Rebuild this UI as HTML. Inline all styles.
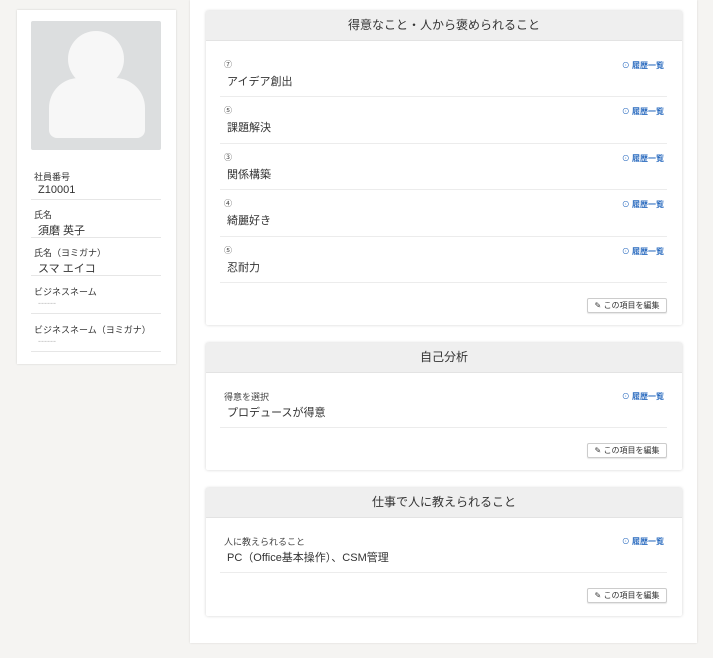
<html><head><style>
body{margin:0;background:#f5f4f2;font-family:"Liberation Sans","Noto Sans CJK JP",sans-serif;color:#333;width:713px;height:658px;position:relative;overflow:hidden}
.abs{position:absolute}
.left{left:17px;top:10px;width:159px;height:354px;background:#fff;box-shadow:0 0 2px rgba(0,0,0,.15)}
.av{left:14px;top:11px;width:130px;height:129px;background:#dcdedf;border-radius:2px;overflow:hidden}
.lab{font-size:9px;color:#333;left:17px}
.val{font-size:11px;left:21px;color:#333}
.ldiv{left:14px;width:130px;height:1px;background:#e6e6e6}
.main{left:190px;top:0;width:507px;height:643px;background:#fff;box-shadow:0 0 2px rgba(0,0,0,.12)}
.sec{left:16px;width:476px;background:#fff;box-shadow:0 0 3px rgba(0,0,0,.18);border-radius:2px}
.hd{position:absolute;left:0;top:0;width:100%;height:29px;background:#efefef;border-bottom:1px solid #e3e3e3;text-align:center;font-size:12px;line-height:29px;color:#333}
.num{font-size:8px;left:18px;color:#444}
.txt{font-size:11px;left:21px}
.dv{left:14px;width:447px;height:1px;background:#ececec}
.hist{right:18px;font-size:8px;color:#2a6bbf;font-weight:bold}
.hist:before{content:"⊙ ";font-weight:normal}
.btn{right:15px;width:78px;height:13px;border:1px solid #ccc;border-radius:2px;font-size:8px;line-height:13px;text-align:center;color:#333;box-shadow:0 1px 1px rgba(0,0,0,.1)}
</style></head><body>
<div class="abs left">
 <div class="abs av">
  <div class="abs" style="left:37px;top:10px;width:56px;height:56px;border-radius:50%;background:#f7f7f7"></div>
  <div class="abs" style="left:18px;top:57px;width:96px;height:60px;border-radius:30px 30px 8px 8px;background:#f7f7f7"></div>
 </div>
 <div class="abs lab" style="top:160px">社員番号</div><div class="abs val" style="top:174px">Z10001</div><div class="abs ldiv" style="top:189px"></div>
 <div class="abs lab" style="top:198px">氏名</div><div class="abs val" style="top:212px">須磨 英子</div><div class="abs ldiv" style="top:227px"></div>
 <div class="abs lab" style="top:236px">氏名（ヨミガナ）</div><div class="abs val" style="top:250px">スマ エイコ</div><div class="abs ldiv" style="top:265px"></div>
 <div class="abs lab" style="top:275px">ビジネスネーム</div><div class="abs val" style="top:288px;color:#bbb;font-size:9px">------</div><div class="abs ldiv" style="top:303px"></div>
 <div class="abs lab" style="top:313px">ビジネスネーム（ヨミガナ）</div><div class="abs val" style="top:326px;color:#bbb;font-size:9px">------</div><div class="abs ldiv" style="top:341px"></div>
</div>
<div class="abs main">
 <div class="abs sec" style="top:11px;height:314px">
  <div class="hd">得意なこと・人から褒められること</div>
  <div class="abs num" style="top:48px">⑦</div><div class="abs txt" style="top:62px">アイデア創出</div><div class="abs hist" style="top:49px">履歴一覧</div><div class="abs dv" style="top:85px"></div>
  <div class="abs num" style="top:94px">⑤</div><div class="abs txt" style="top:108px">課題解決</div><div class="abs hist" style="top:95px">履歴一覧</div><div class="abs dv" style="top:132px"></div>
  <div class="abs num" style="top:141px">③</div><div class="abs txt" style="top:155px">関係構築</div><div class="abs hist" style="top:142px">履歴一覧</div><div class="abs dv" style="top:178px"></div>
  <div class="abs num" style="top:187px">④</div><div class="abs txt" style="top:201px">綺麗好き</div><div class="abs hist" style="top:188px">履歴一覧</div><div class="abs dv" style="top:225px"></div>
  <div class="abs num" style="top:234px">⑤</div><div class="abs txt" style="top:248px">忍耐力</div><div class="abs hist" style="top:235px">履歴一覧</div><div class="abs dv" style="top:271px"></div>
  <div class="abs btn" style="top:287px">✎ この項目を編集</div>
 </div>
 <div class="abs sec" style="top:343px;height:127px">
  <div class="hd">自己分析</div>
  <div class="abs num" style="top:47px;font-size:9px">得意を選択</div><div class="abs txt" style="top:61px">プロデュースが得意</div><div class="abs hist" style="top:48px">履歴一覧</div><div class="abs dv" style="top:84px"></div>
  <div class="abs btn" style="top:100px">✎ この項目を編集</div>
 </div>
 <div class="abs sec" style="top:488px;height:128px">
  <div class="hd">仕事で人に教えられること</div>
  <div class="abs num" style="top:47px;font-size:9px">人に教えられること</div><div class="abs txt" style="top:61px">PC（Office基本操作）、CSM管理</div><div class="abs hist" style="top:48px">履歴一覧</div><div class="abs dv" style="top:84px"></div>
  <div class="abs btn" style="top:100px">✎ この項目を編集</div>
 </div>
</div>
</body></html>
